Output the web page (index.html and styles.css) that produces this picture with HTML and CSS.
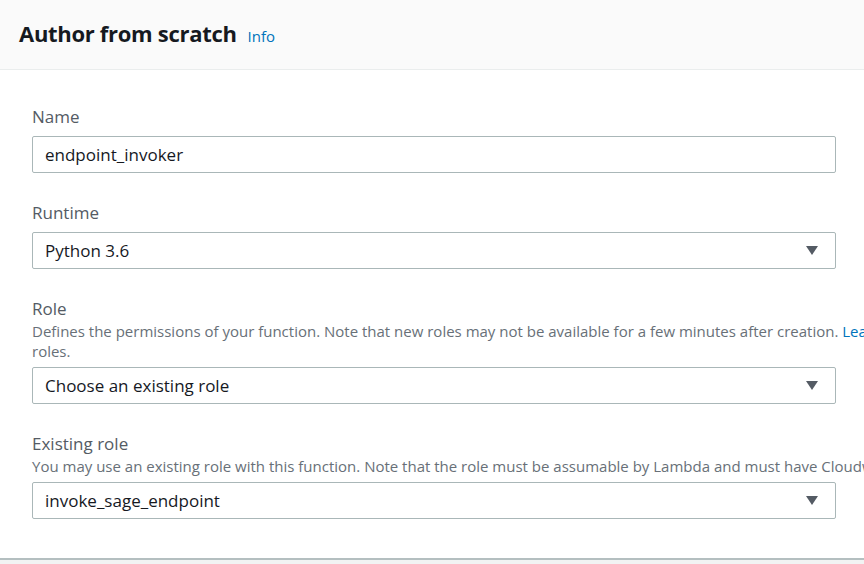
FILE: index.html
```html
<!DOCTYPE html>
<html lang="en">
<head>
<meta charset="utf-8">
<title>Author from scratch</title>
<link rel="stylesheet" href="styles.css">
</head>
<body>
<div class="panel">
  <div class="panel-header">
    <h2 class="panel-title">Author from scratch</h2>
    <a class="info-link" href="#">Info</a>
  </div>
  <div class="panel-body">
    <div class="field">
      <label class="field-label">Name</label>
      <div class="control"><span class="control-value">endpoint_invoker</span></div>
    </div>
    <div class="field">
      <label class="field-label">Runtime</label>
      <div class="control select"><span class="control-value">Python 3.6</span><span class="caret"></span></div>
    </div>
    <div class="field">
      <label class="field-label">Role</label>
      <p class="field-desc">Defines the permissions of your function. Note that new roles may not be available for a few minutes after creation. <a href="#">Learn more about Lambda execution</a><br>roles.</p>
      <div class="control select"><span class="control-value">Choose an existing role</span><span class="caret"></span></div>
    </div>
    <div class="field">
      <label class="field-label">Existing role</label>
      <p class="field-desc">You may use an existing role with this function. Note that the role must be assumable by Lambda and must have Cloudwatch Logs permissions.</p>
      <div class="control select"><span class="control-value">invoke_sage_endpoint</span><span class="caret"></span></div>
    </div>
  </div>
</div>
</body>
</html>
```
FILE: styles.css
```css
html, body {
  margin: 0;
  padding: 0;
  overflow: hidden;
  background: #f2f3f3;
}
body {
  width: 864px;
  height: 564px;
  font-family: "Open Sans", "Noto Sans", Arial, sans-serif;
  color: #16191f;
}
.panel {
  width: 1300px;
  background: #ffffff;
  border-bottom: 2px solid #b4bfc0;
}
.panel-header {
  display: flex;
  align-items: baseline;
  gap: 11px;
  height: 70px;
  box-sizing: border-box;
  padding: 18px 19px 0;
  background: #fafafa;
  border-bottom: 1px solid #eaeded;
}
.panel-title {
  margin: 0;
  font-size: 22px;
  font-weight: 700;
  line-height: 30px;
  color: #16191f;
  letter-spacing: -0.3px;
}
.info-link {
  font-size: 15px;
  color: #0073bb;
  text-decoration: none;
}
.panel-body {
  padding: 36px 32px 39px;
  display: flex;
  flex-direction: column;
  gap: 29px;
}
.field {
  display: flex;
  flex-direction: column;
}
.field-label {
  font-size: 17px;
  line-height: 22px;
  color: #545b64;
}
.field-desc {
  margin: 1px 0 -2px;
  font-size: 15px;
  line-height: 20px;
  color: #687078;
  white-space: nowrap;
}
.field-desc a {
  color: #0073bb;
  text-decoration: none;
}
.control {
  margin-top: 8px;
  width: 804px;
  height: 37px;
  box-sizing: border-box;
  border: 1px solid #aab7b8;
  border-radius: 2px;
  display: flex;
  align-items: center;
  padding: 0 17px 0 12px;
  background: #ffffff;
}
.control-value {
  flex: 1;
  font-size: 17px;
  font-weight: 500;
  color: #16191f;
}
.caret {
  width: 0;
  height: 0;
  border-left: 6.5px solid transparent;
  border-right: 6.5px solid transparent;
  border-top: 9px solid #545b64;
}
```
